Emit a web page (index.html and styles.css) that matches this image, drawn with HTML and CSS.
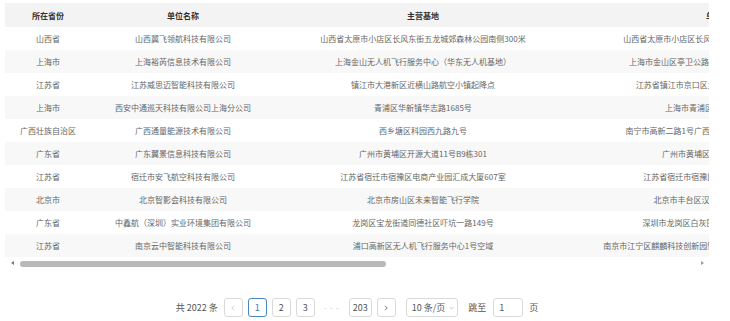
FILE: index.html
```html
<!DOCTYPE html>
<html lang="zh-CN">
<head>
    <meta charset="UTF-8">
    <meta name="viewport" content="width=device-width, initial-scale=1.0">
    <title>单位列表</title>
    <link rel="stylesheet" href="styles.css">
</head>
<body>
    <div class="list-panel">
        <div class="table-wrap">
            <table class="data-table">
                <colgroup>
                    <col class="col-province">
                    <col class="col-name">
                    <col class="col-base">
                    <col class="col-address">
                </colgroup>
                <thead>
                    <tr>
                        <th>所在省份</th>
                        <th>单位名称</th>
                        <th>主营基地</th>
                        <th>单位所在地</th>
                    </tr>
                </thead>
                <tbody>
                    <tr>
                        <td>山西省</td>
                        <td>山西冀飞领航科技有限公司</td>
                        <td>山西省太原市小店区长风东街五龙城郊森林公园南侧300米</td>
                        <td>山西省太原市小店区长风东街五龙城郊森林公园南侧300米</td>
                    </tr>
                    <tr>
                        <td>上海市</td>
                        <td>上海裕芮信息技术有限公司</td>
                        <td>上海金山无人机飞行服务中心（华东无人机基地）</td>
                        <td>上海市金山区亭卫公路6558号华东无人机基地（北区）</td>
                    </tr>
                    <tr>
                        <td>江苏省</td>
                        <td>江苏威思迈智能科技有限公司</td>
                        <td>镇江市大港新区近横山路航空小镇起降点</td>
                        <td>江苏省镇江市京口区大港新区近横山路航空小镇1号</td>
                    </tr>
                    <tr>
                        <td>上海市</td>
                        <td>西安中通巡天科技有限公司上海分公司</td>
                        <td>青浦区华新镇华志路1685号</td>
                        <td>上海市青浦区华新镇华志路1685号</td>
                    </tr>
                    <tr>
                        <td>广西壮族自治区</td>
                        <td>广西通量能源技术有限公司</td>
                        <td>西乡塘区科园西九路九号</td>
                        <td>南宁市高新二路1号广西通量能源技术有限公司办公楼4楼</td>
                    </tr>
                    <tr>
                        <td>广东省</td>
                        <td>广东翼景信息科技有限公司</td>
                        <td>广州市黄埔区开源大道11号B9栋301</td>
                        <td>广州市黄埔区开源大道11号B9栋301</td>
                    </tr>
                    <tr>
                        <td>江苏省</td>
                        <td>宿迁市安飞航空科技有限公司</td>
                        <td>江苏省宿迁市宿豫区电商产业园汇成大厦607室</td>
                        <td>江苏省宿迁市宿豫区电商产业园汇成大厦607室</td>
                    </tr>
                    <tr>
                        <td>北京市</td>
                        <td>北京智影会科技有限公司</td>
                        <td>北京市房山区未来智能飞行学院</td>
                        <td>北京市丰台区汉威国际广场四区3号楼5层</td>
                    </tr>
                    <tr>
                        <td>广东省</td>
                        <td>中鑫航（深圳）实业环境集团有限公司</td>
                        <td>龙岗区宝龙街道同德社区吓坑一路149号</td>
                        <td>深圳市龙岗区白灰围社区吓坑一路149号2栋201</td>
                    </tr>
                    <tr>
                        <td>江苏省</td>
                        <td>南京云中智能科技有限公司</td>
                        <td>浦口高新区无人机飞行服务中心1号空域</td>
                        <td>南京市江宁区麒麟科技创新园智汇路300号南京云中智能科技有限公司</td>
                    </tr>
                </tbody>
            </table>
        </div>

        <!-- horizontal scrollbar -->
        <div class="scrollbar">
            <span class="scroll-arrow arrow-left"></span>
            <div class="scroll-track">
                <div class="scroll-thumb"></div>
            </div>
            <span class="scroll-arrow arrow-right"></span>
        </div>

        <div class="pagination">
            <span class="total">共 2022 条</span>
            <button class="page-item disabled">
                <svg width="6" height="6" viewBox="0 0 6 6"><path d="M4 0.8 L1.8 3 L4 5.2" fill="none" stroke="currentColor" stroke-width="0.8"/></svg>
            </button>
            <button class="page-item active">1</button>
            <button class="page-item">2</button>
            <button class="page-item">3</button>
            <span class="page-ellipsis">•••</span>
            <button class="page-item">203</button>
            <button class="page-item">
                <svg width="6" height="6" viewBox="0 0 6 6"><path d="M2 0.8 L4.2 3 L2 5.2" fill="none" stroke="currentColor" stroke-width="0.8"/></svg>
            </button>
            <div class="page-size">
                <span>10 条/页</span>
                <svg width="5" height="4" viewBox="0 0 6 4"><path d="M0.8 0.8 L3 3 L5.2 0.8" fill="none" stroke="currentColor" stroke-width="0.7"/></svg>
            </div>
            <span class="jumper">跳至</span>
            <input class="jump-input" type="text" value="1">
            <span class="jumper">页</span>
        </div>
    </div>
</body>
</html>
```

FILE: styles.css
```css
body {
    font-family: "Noto Sans CJK SC", "Noto Sans", sans-serif;
    margin: 0;
    padding: 0;
    background-color: #fff;
    color: #666;
}

.list-panel {
    width: 704px;
    padding: 3px 0 0 5px;
}

.table-wrap {
    width: 704px;
    overflow: hidden;
}

.data-table {
    width: 876px;
    table-layout: fixed;
    border-collapse: collapse;
    font-size: 8px;
}

.col-province { width: 86px; }
.col-name { width: 184px; }
.col-base { width: 296px; }
.col-address { width: 310px; }

.data-table th,
.data-table td {
    padding: 0 4px;
    text-align: center;
    white-space: nowrap;
    overflow: hidden;
}

.data-table th {
    height: 24px;
    background-color: #f3f3f3;
    color: #333;
    font-weight: bold;
}

.data-table td {
    height: 23px;
    color: #666;
}

.data-table tbody tr:nth-child(even) td {
    background-color: #f8f8f8;
}

.scrollbar {
    display: flex;
    align-items: center;
    height: 11px;
    margin-top: 1px;
}

.scroll-arrow {
    width: 12px;
    height: 11px;
    position: relative;
}

.scroll-arrow::after {
    content: "";
    position: absolute;
    top: 3px;
    border-top: 2.5px solid transparent;
    border-bottom: 2.5px solid transparent;
}

.arrow-left::after {
    left: 6px;
    border-right: 3px solid #777;
}

.arrow-right::after {
    right: 5px;
    border-left: 3px solid #999;
}

.scroll-track {
    flex: 1;
    height: 11px;
    display: flex;
    align-items: center;
    padding-left: 3px;
}

.scroll-thumb {
    width: 54%;
    height: 6px;
    border-radius: 3px;
    background-color: #b9b9b9;
}

.pagination {
    display: flex;
    align-items: center;
    justify-content: center;
    margin-top: 29px;
    font-size: 9px;
    color: #555;
}

.total {
    margin-right: 6px;
}

.page-item {
    min-width: 19px;
    height: 19px;
    padding: 0 3px;
    margin-right: 5px;
    border: 1px solid #d9d9d9;
    border-radius: 3px;
    background-color: #fff;
    color: #555;
    font-family: inherit;
    font-size: 9px;
    display: flex;
    align-items: center;
    justify-content: center;
    box-sizing: border-box;
}

.page-item.active {
    border-color: #4a86c0;
    color: #3a78b8;
}

.page-item.disabled {
    color: #c4c4c4;
}

.page-ellipsis {
    width: 24px;
    margin-right: 5px;
    text-align: center;
    font-size: 5px;
    letter-spacing: 1px;
    color: #bbb;
}

.page-size {
    display: flex;
    align-items: center;
    gap: 4px;
    height: 19px;
    box-sizing: border-box;
    padding: 0 3px 0 5px;
    margin-left: 5px;
    margin-right: 10px;
    border: 1px solid #d9d9d9;
    border-radius: 3px;
    color: #555;
    white-space: nowrap;
}

.page-size svg {
    color: #999;
}

.jumper {
    color: #555;
    white-space: nowrap;
}

.jump-input {
    width: 30px;
    height: 19px;
    box-sizing: border-box;
    margin: 0 6px 0 7px;
    padding: 0 5px;
    border: 1px solid #d9d9d9;
    border-radius: 3px;
    font-family: inherit;
    font-size: 9px;
    color: #555;
    outline: none;
}
```
